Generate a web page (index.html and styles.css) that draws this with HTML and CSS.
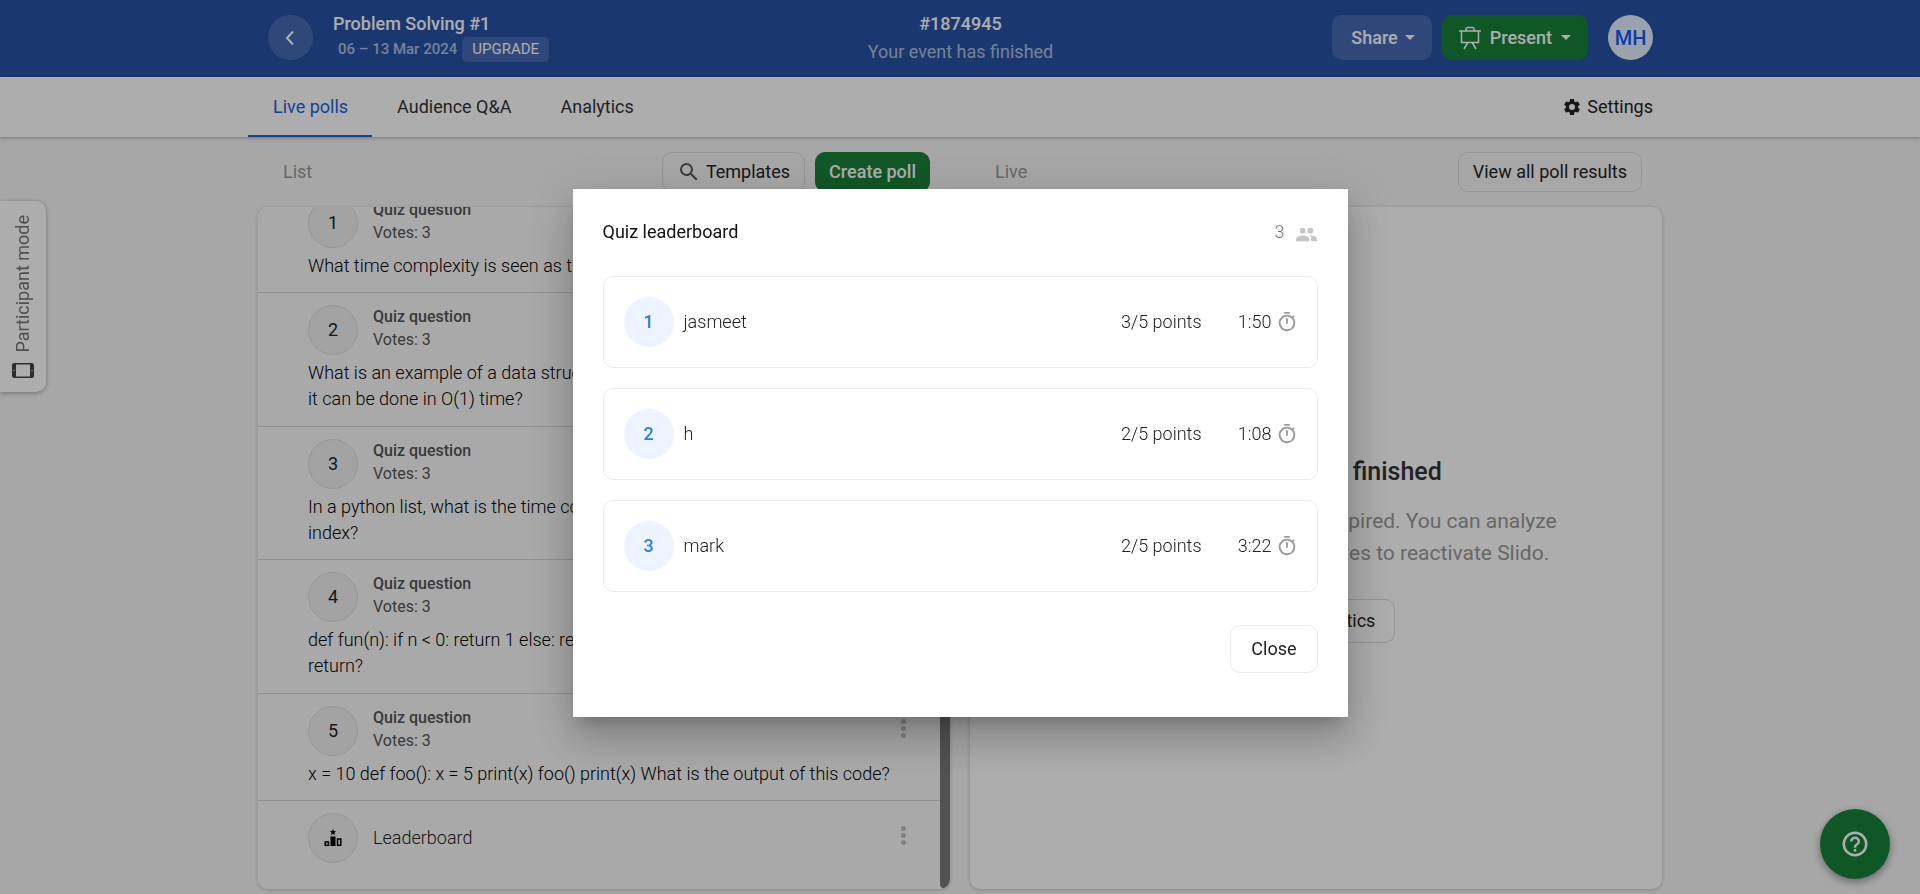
FILE: index.html
```html
<!DOCTYPE html>
<html lang="en">
<head>
<meta charset="utf-8">
<title>Problem Solving #1</title>
<link rel="stylesheet" href="styles.css">
</head>
<body>
<div class="page">
  <header class="topbar">
    <div class="topbar-inner">
      <div class="event">
        <button class="back" aria-label="Back"><svg width="24" height="24" viewBox="0 0 24 24" fill="none" stroke="currentColor" stroke-width="2"><path d="M14 5.500L8 12l6 6.500"/></svg></button>
        <div>
          <h1 class="event-name">Problem Solving #1</h1>
          <div class="event-meta"><span class="event-date">06 – 13 Mar 2024</span><button class="upgrade">UPGRADE</button></div>
        </div>
      </div>
      <div class="event-code"><strong>#1874945</strong><span>Your event has finished</span></div>
      <div class="top-actions">
        <button class="btn-top share">Share<span class="caret"></span></button>
        <button class="btn-top present"><svg width="22" height="24" viewBox="0 0 22 24" fill="none" stroke="currentColor" stroke-width="1.5"><path d="M0 5h22M2.500 5v11.500h17V5M7 5V3q0-1.500 1.500-1.500h5Q15 1.500 15 3v2M8.500 17l-3.500 6M13.500 17l3.500 6"/></svg>Present<span class="caret"></span></button>
        <button class="avatar">MH</button>
      </div>
    </div>
  </header>
  <nav class="tabs">
    <div class="tabs-inner">
      <a class="tab active" href="#polls">Live polls</a>
      <a class="tab" href="#qa">Audience Q&amp;A</a>
      <a class="tab" href="#analytics">Analytics</a>
      <a class="settings" href="#settings"><svg width="20" height="20" viewBox="0 0 24 24" fill="currentColor"><path d="M19.140 12.940c.04-.3.060-.61.060-.94s-.02-.64-.07-.94l2.030-1.580a.5.5 0 0 0 .12-.61l-1.920-3.320a.5.5 0 0 0-.59-.22l-2.390.96a7 7 0 0 0-1.620-.94l-.36-2.540a.5.5 0 0 0-.48-.41h-3.840a.5.5 0 0 0-.47.41l-.36 2.540c-.59.24-1.130.57-1.620.94l-2.390-.96a.5.5 0 0 0-.59.22L2.740 8.870a.5.5 0 0 0 .12.61l2.030 1.580c-.05.3-.09.63-.09.94s.02.64.07.94l-2.030 1.580a.5.5 0 0 0-.12.61l1.920 3.320c.12.22.37.29.59.22l2.390-.96c.5.38 1.030.7 1.620.94l.36 2.540c.05.24.24.41.48.41h3.840c.24 0 .44-.17.47-.41l.36-2.540a7 7 0 0 0 1.620-.94l2.390.96c.22.08.47 0 .59-.22l1.920-3.320a.5.5 0 0 0-.12-.61zM12 15.600a3.600 3.600 0 1 1 0-7.200 3.600 3.600 0 0 1 0 7.200z"/></svg>Settings</a>
    </div>
  </nav>

  <main class="columns">
    <section class="column">
      <div class="column-head">
        <h2 class="column-title">List</h2>
        <div class="column-actions">
          <button class="btn"><svg width="24" height="24" viewBox="0 0 24 24" fill="#555"><path d="M15.500 14h-.79l-.28-.27A6.470 6.470 0 0 0 16 9.500 6.500 6.500 0 1 0 9.500 16c1.610 0 3.090-.59 4.230-1.570l.27.28v.79l5 4.990L20.490 19zm-6 0a4.500 4.500 0 1 1 0-9 4.500 4.500 0 0 1 0 9z"/></svg>Templates</button>
          <button class="btn btn-green">Create poll</button>
        </div>
      </div>
      <div class="panel list-panel">
        <div class="polls">
          <article class="poll">
            <div class="poll-head"><span class="num">1</span><div class="poll-info"><b>Quiz question</b><span>Votes: 3</span></div></div>
            <p class="poll-text">What time complexity is seen as the most efficient?</p>
          </article>
          <article class="poll">
            <div class="poll-head"><span class="num">2</span><div class="poll-info"><b>Quiz question</b><span>Votes: 3</span></div></div>
            <p class="poll-text">What is an example of a data structure where to look up an element<br>it can be done in O(1) time?</p>
          </article>
          <article class="poll">
            <div class="poll-head"><span class="num">3</span><div class="poll-info"><b>Quiz question</b><span>Votes: 3</span></div></div>
            <p class="poll-text">In a python list, what is the time complexity of accessing an<br>index?</p>
          </article>
          <article class="poll">
            <div class="poll-head"><span class="num">4</span><div class="poll-info"><b>Quiz question</b><span>Votes: 3</span></div></div>
            <p class="poll-text">def fun(n): if n &lt; 0: return 1 else: return fun(n-1) What does it<br>return?</p>
          </article>
          <article class="poll">
            <div class="poll-head"><span class="num">5</span><div class="poll-info"><b>Quiz question</b><span>Votes: 3</span></div><button class="kebab" aria-label="More options"><i></i><i></i><i></i></button></div>
            <p class="poll-text">x = 10 def foo(): x = 5 print(x) foo() print(x) What is the output of this code?</p>
          </article>
          <article class="poll poll-last">
            <div class="poll-head"><span class="num"><svg width="18" height="18" viewBox="0 0 18 18"><path fill="#000" d="M6.500 7.500h5V17h-5zM9 0l.9 2 2.200.3-1.600 1.400.4 2.200L9 4.900 7.100 5.900l.4-2.200L5.900 2.300 8.100 2z"/><path fill="none" stroke="#000" stroke-width="1.500" d="M1.200 13H4.500v3.300H1.200zM13.500 10h3.300v6.300h-3.300z"/></svg></span><span class="board-label">Leaderboard</span><button class="kebab" aria-label="More options"><i></i><i></i><i></i></button></div>
          </article>
        </div>
        <div class="scrollbar"></div>
      </div>
    </section>

    <section class="column">
      <div class="column-head">
        <h2 class="column-title">Live</h2>
        <div class="column-actions"><button class="btn">View all poll results</button></div>
      </div>
      <div class="panel live-panel">
        <h3 class="live-title">The event has finished</h3>
        <p class="live-text">Your event period has now expired. You can analyze<br>the results or change the dates to reactivate Slido.</p>
        <button class="btn btn-large">Go to analytics</button>
      </div>
    </section>
  </main>
</div>

<button class="participant"><svg width="22" height="15" viewBox="0 0 22 15"><path fill="#444" fill-rule="evenodd" d="M2.500 0h17Q22 0 22 2.500v10q0 2.500-2.500 2.500h-17Q0 15 0 12.500v-10Q0 0 2.500 0zM4 1.500v12h14v-12zM1.500 7v1h1v-1zM19.500 7v1h1v-1z"/></svg><span class="participant-label">Participant mode</span></button>
<button class="help" aria-label="Help"><svg width="30" height="30" viewBox="0 0 24 24" fill="#fff"><path d="M11 18h2v-2h-2zm1-16a10 10 0 1 0 0 20 10 10 0 0 0 0-20zm0 18a8 8 0 1 1 0-16 8 8 0 0 1 0 16zm0-14a4 4 0 0 0-4 4h2a2 2 0 1 1 4 0c0 2-3 1.750-3 5h2c0-2.250 3-2.500 3-5a4 4 0 0 0-4-4z"/></svg></button>

<div class="overlay">
  <div class="modal" role="dialog" aria-labelledby="modal-title">
    <div class="modal-head">
      <h2 class="modal-title" id="modal-title">Quiz leaderboard</h2>
      <div class="people">3<svg width="23" height="23" viewBox="0 0 24 24" fill="#c6c6c6"><path d="M16 11a3 3 0 1 0 0-6 3 3 0 0 0 0 6zm-8 0a3 3 0 1 0 0-6 3 3 0 0 0 0 6zm0 2c-2.330 0-7 1.170-7 3.500V19h14v-2.500C15 14.170 10.330 13 8 13zm8 0c-.29 0-.62.020-.97.050 1.160.84 1.970 1.970 1.970 3.450V19h6v-2.500c0-2.330-4.670-3.500-7-3.500z"/></svg></div>
    </div>
    <ol class="ranking">
      <li class="rank"><span class="place">1</span><span class="player">jasmeet</span><span class="points">3/5 points</span><span class="time">1:50</span><svg class="clock" width="22" height="22" viewBox="0 0 24 24"><use href="#timer"/></svg></li>
      <li class="rank"><span class="place">2</span><span class="player">h</span><span class="points">2/5 points</span><span class="time">1:08</span><svg class="clock" width="22" height="22" viewBox="0 0 24 24"><use href="#timer"/></svg></li>
      <li class="rank"><span class="place">3</span><span class="player">mark</span><span class="points">2/5 points</span><span class="time">3:22</span><svg class="clock" width="22" height="22" viewBox="0 0 24 24"><use href="#timer"/></svg></li>
    </ol>
    <div class="modal-foot"><button class="close">Close</button></div>
  </div>
</div>
<svg class="defs" width="0" height="0"><defs><path id="timer" d="M15 1H9v2h6zm-4 13h2V8h-2zm8.030-6.610 1.420-1.420c-.43-.51-.9-.99-1.410-1.410l-1.420 1.420A9 9 0 1 0 21 13c0-2.120-.74-4.070-1.970-5.610zM12 20a7 7 0 1 1 0-14 7 7 0 0 1 0 14z"/></defs></svg>
</body>
</html>
```
FILE: styles.css
```css
* { box-sizing: border-box; }
body {
  margin: 0;
  font: 300 18px/26px Roboto, "Liberation Sans", sans-serif;
  color: #222;
  background: #f7f7f7;
}
button { font: inherit; color: inherit; border: 0; padding: 0; background: none; cursor: pointer; }
a { color: inherit; text-decoration: none; }
h1, h2, h3, p, ol { margin: 0; padding: 0; font-size: inherit; font-weight: inherit; }

.page { display: flex; flex-direction: column; height: 100vh; overflow: hidden; }

/* Top bar */
.topbar { flex: none; background: #2952a6; color: #fff; }
.topbar-inner {
  display: grid; grid-template-columns: 1fr auto 1fr;
  max-width: 1424px; height: 77px; margin: 0 auto; padding: 0 19px 0 20px;
}
.event { display: flex; gap: 20px; padding-top: 11px; }
.back {
  display: flex; align-items: center; justify-content: center;
  width: 45px; height: 45px; margin-top: 4px; border-radius: 50%;
  background: rgba(255, 255, 255, .15);
}
.event .event-name { font-weight: 500; }
.event-meta { display: flex; align-items: center; gap: 5px; padding-left: 5px; font-size: 15px; line-height: 25px; }
.event-date { font-weight: 500; color: rgba(255, 255, 255, .65); }
.upgrade { padding: 0 10px; border-radius: 5px; background: rgba(255, 255, 255, .15); font-weight: 400; }
.event-code { display: flex; flex-direction: column; align-items: center; padding-top: 11px; }
.event-code strong { font-weight: 500; }
.event-code span { line-height: 30px; font-weight: 400; color: rgba(255, 255, 255, .65); }
.top-actions { display: flex; justify-content: flex-end; gap: 10px; padding-top: 15px; }
.btn-top { display: flex; align-items: center; height: 45px; border-radius: 10px; font-weight: 500; }
.share { gap: 7px; padding: 0 17px 0 19px; background: rgba(255, 255, 255, .15); }
.present { gap: 9px; padding: 0 17px; background: #198139; }
.caret { border: 5px solid transparent; border-top-color: currentColor; border-bottom: 0; }
.avatar { width: 45px; height: 45px; margin-left: 10px; border-radius: 50%; background: #e4f0ff; color: #0f5bf5; font-size: 20px; font-weight: 500; }

/* Tabs */
.tabs { flex: none; position: relative; background: #fff; box-shadow: 0 1px 4px rgba(0, 0, 0, .3); }
.tabs-inner { display: flex; max-width: 1424px; height: 60px; margin: 0 auto; padding-right: 19px; }
.tab { padding: 17px 24px 0 25px; font-weight: 400; color: #333; }
.tab.active { color: #1d62d8; border-bottom: 2px solid #1d62d8; }
.settings { display: flex; align-items: center; gap: 5px; margin-left: auto; font-weight: 400; }

/* Columns */
.columns {
  flex: 1; min-height: 0; display: grid; grid-template-columns: 1fr 1fr; gap: 20px;
  width: 100%; max-width: 1404px; margin: 0 auto; padding-bottom: 5px;
}
.column { display: flex; flex-direction: column; min-height: 0; min-width: 0; }
.column-head { display: flex; justify-content: space-between; align-items: center; padding: 15px 20px 15px 25px; }
.column-title { font-weight: 400; color: #999; }
.column-actions { display: flex; gap: 10px; }
.btn {
  display: flex; align-items: center; gap: 5px; height: 40px; padding: 0 14px;
  border: 1px solid #dcdcdc; border-radius: 10px; font-weight: 400; white-space: nowrap;
}
.btn-green { padding: 0 13px; background: #198139; border-color: #198139; color: #fff; font-weight: 500; }
.btn-large { height: 44px; padding: 0 19px; }
.panel { flex: 1; min-height: 0; border-radius: 10px; background: #fff; box-shadow: 0 1px 4px rgba(0, 0, 0, .2); overflow: hidden; }

/* Poll list, scrolled to its end */
.list-panel { display: flex; }
.polls { flex: 1; min-width: 0; display: flex; flex-direction: column; justify-content: flex-end; background: #fafafa; }
.scrollbar { width: 10px; margin-top: 80px; border-radius: 5px; background: #797979; }
.poll { flex: none; padding: 12px 30px 13px 50px; border-bottom: 1px solid #d6d6d6; }
.poll:nth-child(even) { padding-bottom: 14px; }
.poll-head { display: flex; gap: 15px; }
.num {
  display: flex; align-items: center; justify-content: center; flex: none; font-weight: 400;
  width: 50px; height: 50px; border: 1px solid #dedede; border-radius: 50%; background: #f0f0f0;
}
.poll-info { flex: 1; display: flex; flex-direction: column; font-size: 16px; line-height: 23px; font-weight: 400; color: #555; }
.poll-info b { font-weight: 500; }
.poll-text { padding-top: 5px; color: #000; white-space: nowrap; }
.poll.poll-last { padding-bottom: 26px; border-bottom: 0; }
.board-label { flex: 1; line-height: 50px; color: #222; }
.kebab { display: flex; flex-direction: column; align-items: center; justify-content: center; gap: 2px; width: 14px; height: 44px; }
.kebab i { width: 5px; height: 5px; border-radius: 50%; background: #c0c0c0; }

/* Live panel */
.live-panel { display: flex; flex-direction: column; align-items: center; padding-top: 250px; text-align: center; }
.live-panel .live-title { font-size: 25px; line-height: 30px; font-weight: 500; color: #333; }
.live-text { padding: 18px 0 30px; font-size: 21px; line-height: 32px; font-weight: 400; color: #999; }

/* Side tab and help */
.participant {
  position: fixed; left: 0; top: 201px; width: 46px; height: 191px; padding: 14px 0;
  display: flex; flex-direction: column-reverse; align-items: center; justify-content: space-between;
  border-radius: 0 10px 10px 0; background: #fff; color: #777; box-shadow: 0 1px 5px rgba(0, 0, 0, .35);
}
.participant-label { writing-mode: vertical-rl; transform: rotate(180deg); white-space: nowrap; font-weight: 400; }
.help {
  position: fixed; right: 30px; bottom: 15px; width: 70px; height: 70px;
  display: flex; align-items: center; justify-content: center;
  border-radius: 50%; background: #198139; box-shadow: 0 3px 8px rgba(0, 0, 0, .4);
}

/* Modal */
.overlay {
  position: fixed; inset: 0; display: flex; align-items: center; justify-content: center;
  padding-top: 12px; background: rgba(0, 0, 0, .32);
}
.modal {
  width: 100%; max-width: 775px; padding: 30px 30px 44px; background: #fff;
  box-shadow: 0 11px 15px -7px rgba(0, 0, 0, .2), 0 24px 38px 3px rgba(0, 0, 0, .14), 0 9px 46px 8px rgba(0, 0, 0, .12);
}
.modal-head { display: flex; justify-content: space-between; height: 26px; }
.modal .modal-title { font-weight: 400; color: #111; }
.people { display: flex; gap: 10px; color: #777; }
.people svg { margin-top: 4px; }
.ranking { display: flex; flex-direction: column; gap: 20px; padding: 31px 0 33px; list-style: none; }
.rank { display: flex; align-items: center; height: 92px; padding: 0 19px 0 20px; border: 1px solid #eaeaea; border-radius: 10px; color: #222; }
.place {
  width: 50px; margin-right: 10px; border-radius: 50%; background: #edf4ff;
  color: #2a7de1; font-weight: 500; line-height: 50px; text-align: center;
}
.player { flex: 1; }
.time { width: 70px; text-align: right; }
.clock { margin-left: 4px; fill: #999; }
.modal-foot { display: flex; justify-content: flex-end; }
.close { height: 48px; padding: 0 20px; border: 1px solid #eaeaea; border-radius: 10px; font-weight: 400; }
.defs { position: absolute; }
```
